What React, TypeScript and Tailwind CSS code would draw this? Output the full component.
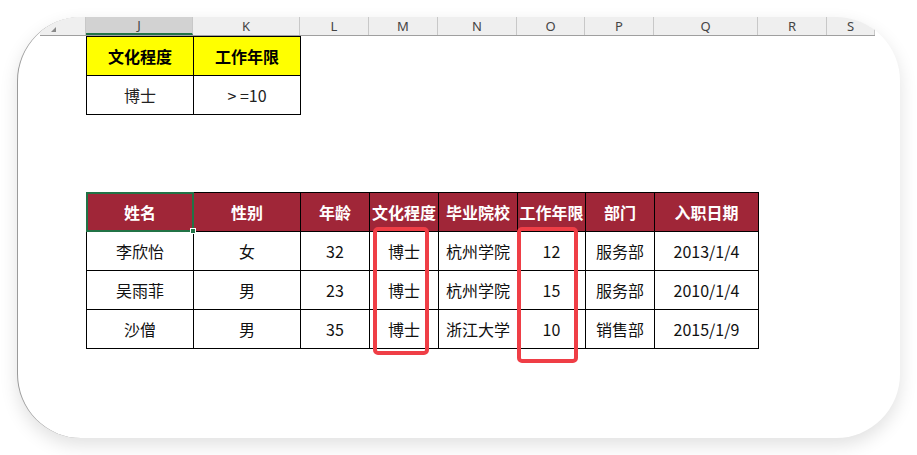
import React from 'react';

const colHeads = [
  { k: 'J', w: 'w-[107px]', sel: true },
  { k: 'K', w: 'w-[107px]' },
  { k: 'L', w: 'w-[69px]' },
  { k: 'M', w: 'w-[69px]' },
  { k: 'N', w: 'w-[79px]' },
  { k: 'O', w: 'w-[68px]' },
  { k: 'P', w: 'w-[69px]' },
  { k: 'Q', w: 'w-[104px]' },
  { k: 'R', w: 'w-[69px]' },
  { k: 'S', w: 'w-[48px]' },
];

const heads = [
  { t: '姓名', w: 'w-[107px]' },
  { t: '性别', w: 'w-[107px]' },
  { t: '年龄', w: 'w-[69px]' },
  { t: '文化程度', w: 'w-[69px]' },
  { t: '毕业院校', w: 'w-[79px]' },
  { t: '工作年限', w: 'w-[68px]' },
  { t: '部门', w: 'w-[69px]' },
  { t: '入职日期', w: 'w-[104px]' },
];

const rows = [
  ['李欣怡', '女', '32', '博士', '杭州学院', '12', '服务部', '2013/1/4'],
  ['吴雨菲', '男', '23', '博士', '杭州学院', '15', '服务部', '2010/1/4'],
  ['沙僧', '男', '35', '博士', '浙江大学', '10', '销售部', '2015/1/9'],
];

export default function App() {
  return (
    <div
      className="w-[917px] h-[455px] bg-white pt-[17px] pl-[17px]"
      style={{ fontFamily: '"Noto Sans CJK SC", "Noto Sans", sans-serif' }}
    >
      <div className="w-[883px] h-[421px] bg-white rounded-[64px] overflow-hidden border-l border-[#9a9a9a] shadow-[0_7px_18px_rgba(0,0,0,0.12)]">
        {/* column letters */}
        <div className="flex h-[19px] ml-[22px] w-[835px] bg-[#efefef] border-b border-[#9f9f9f]">
          <div className="w-[46px] h-full relative border-r border-[#c8c8c8]">
            <svg className="absolute left-[11px] top-[10px]" width="5" height="5" viewBox="0 0 5 5">
              <path d="M5 0 L5 5 L0 5 Z" fill="#8a8a8a" />
            </svg>
          </div>
          {colHeads.map(c => (
            <div
              key={c.k}
              className={`${c.w} h-full flex items-center justify-center text-[13px] leading-none text-[#444] border-r border-[#c8c8c8] ${
                c.sel ? 'bg-[#d2d2d2] border-b-2 border-b-[#217346]' : ''
              }`}
              style={{ fontFamily: '"Noto Sans", sans-serif' }}
            >
              {c.k}
            </div>
          ))}
        </div>

        <div className="pl-[68px]">
          {/* criteria */}
          <table className="border-collapse table-fixed text-[16px] text-black">
            <tbody>
              <tr className="h-[39px] bg-[#ffff00] font-bold">
                <td className="w-[107px] border border-black text-center p-0">文化程度</td>
                <td className="w-[107px] border border-black text-center p-0">工作年限</td>
              </tr>
              <tr className="h-[39px]">
                <td className="border border-black text-center p-0 text-[#222]">博士</td>
                <td className="border border-black text-center p-0 text-[#222]">&gt; =10</td>
              </tr>
            </tbody>
          </table>

          {/* data */}
          <div className="relative mt-[77px] w-fit">
            <table className="border-collapse table-fixed text-[16px]">
              <thead>
                <tr className="h-[39px] bg-[#a02638] text-white font-bold">
                  {heads.map((h, i) => (
                    <th key={h.t} className={`${h.w} border border-black p-0 text-center whitespace-nowrap ${i === 0 ? 'relative' : ''}`}>
                      {h.t}
                      {i === 0 && (
                        <div className="absolute -inset-[1px] border-2 border-[#217346]">
                          <div className="absolute -right-[4px] -bottom-[4px] w-[6px] h-[6px] bg-[#217346] border border-white" />
                        </div>
                      )}
                    </th>
                  ))}
                </tr>
              </thead>
              <tbody>
                {rows.map(r => (
                  <tr key={r[0]} className="h-[39px] text-[#111]">
                    {r.map((v, i) => (
                      <td key={i} className="border border-black p-0 text-center whitespace-nowrap">{v}</td>
                    ))}
                  </tr>
                ))}
              </tbody>
            </table>
            <div className="absolute left-[287px] top-[35px] w-[56px] h-[128px] border-4 border-[#ef3e46] rounded-[5px]" />
            <div className="absolute left-[431px] top-[35px] w-[61px] h-[136px] border-4 border-[#ef3e46] rounded-[5px]" />
          </div>
        </div>
      </div>
    </div>
  );
}
